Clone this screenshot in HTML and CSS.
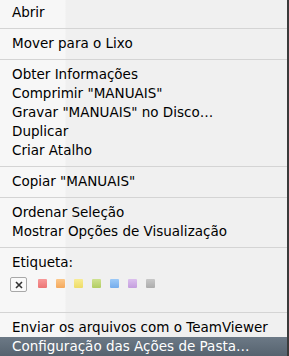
FILE: index.html
```html
<!DOCTYPE html>
<html lang="pt">
<head>
<meta charset="utf-8">
<link rel="stylesheet" href="styles.css">
</head>
<body>
<div class="menu">
  <div class="item">Abrir</div>
  <div class="sep"></div>
  <div class="item">Mover para o Lixo</div>
  <div class="sep"></div>
  <div class="item">Obter Informações</div>
  <div class="item">Comprimir "MANUAIS"</div>
  <div class="item">Gravar "MANUAIS" no Disco…</div>
  <div class="item">Duplicar</div>
  <div class="item">Criar Atalho</div>
  <div class="sep"></div>
  <div class="item">Copiar "MANUAIS"</div>
  <div class="sep"></div>
  <div class="item">Ordenar Seleção</div>
  <div class="item">Mostrar Opções de Visualização</div>
  <div class="sep"></div>
  <div class="item">Etiqueta:</div>
  <div class="labels">
    <span class="none">
      <svg width="8" height="8" viewBox="0 0 8 8"><path d="M1 1L7 7M7 1L1 7" stroke="#333" stroke-width="1.6"/></svg>
    </span>
    <span class="sw red"></span>
    <span class="sw orange"></span>
    <span class="sw yellow"></span>
    <span class="sw green"></span>
    <span class="sw blue"></span>
    <span class="sw purple"></span>
    <span class="sw gray"></span>
  </div>
  <div class="sep"></div>
  <div class="item">Enviar os arquivos com o TeamViewer</div>
  <div class="item selected">Configuração das Ações de Pasta…</div>
</div>
</body>
</html>
```
FILE: styles.css
```css
html, body {
  margin: 0;
  padding: 0;
  background: #3a3a3a;
}
.menu {
  width: 287px;
  height: 356px;
  box-sizing: border-box;
  padding-top: 3px;
  background: linear-gradient(to right, #f7f7f7 0, #f7f7f7 65px, #f0f0f0 66px, #f0f0f0 100%);
  font-family: "DejaVu Sans", "Liberation Sans", sans-serif;
  font-size: 13.5px;
  color: #000;
  overflow: hidden;
}
.item {
  height: 19px;
  line-height: 19px;
  padding-left: 12px;
  white-space: nowrap;
}
.sep {
  height: 1px;
  margin: 6px 0 5px;
  background: #d4d4d4;
}
.selected {
  background: linear-gradient(#6c7986, #56636f);
  color: #fff;
}
.labels {
  height: 34px;
  display: flex;
  align-items: flex-start;
  padding: 5px 0 0 10px;
  box-sizing: border-box;
}
.none {
  width: 15px;
  height: 13px;
  border: 1px solid #a8a8a8;
  border-radius: 2px;
  background: #fafafa;
  display: flex;
  align-items: center;
  justify-content: center;
  margin-right: 11px;
}
.sw {
  width: 9px;
  height: 9px;
  margin-top: 2px;
  margin-right: 9px;
  border-radius: 1px;
}
.red { background: linear-gradient(#f89a9a, #ec7474); }
.orange { background: linear-gradient(#fcc88a, #f4a85c); }
.yellow { background: linear-gradient(#f8ec94, #eedc66); }
.green { background: linear-gradient(#cfe290, #b2cd62); }
.blue { background: linear-gradient(#9ccaf8, #74acec); }
.purple { background: linear-gradient(#dcc0ee, #c49ede); }
.gray { background: linear-gradient(#c8c8c8, #acacac); }
```
